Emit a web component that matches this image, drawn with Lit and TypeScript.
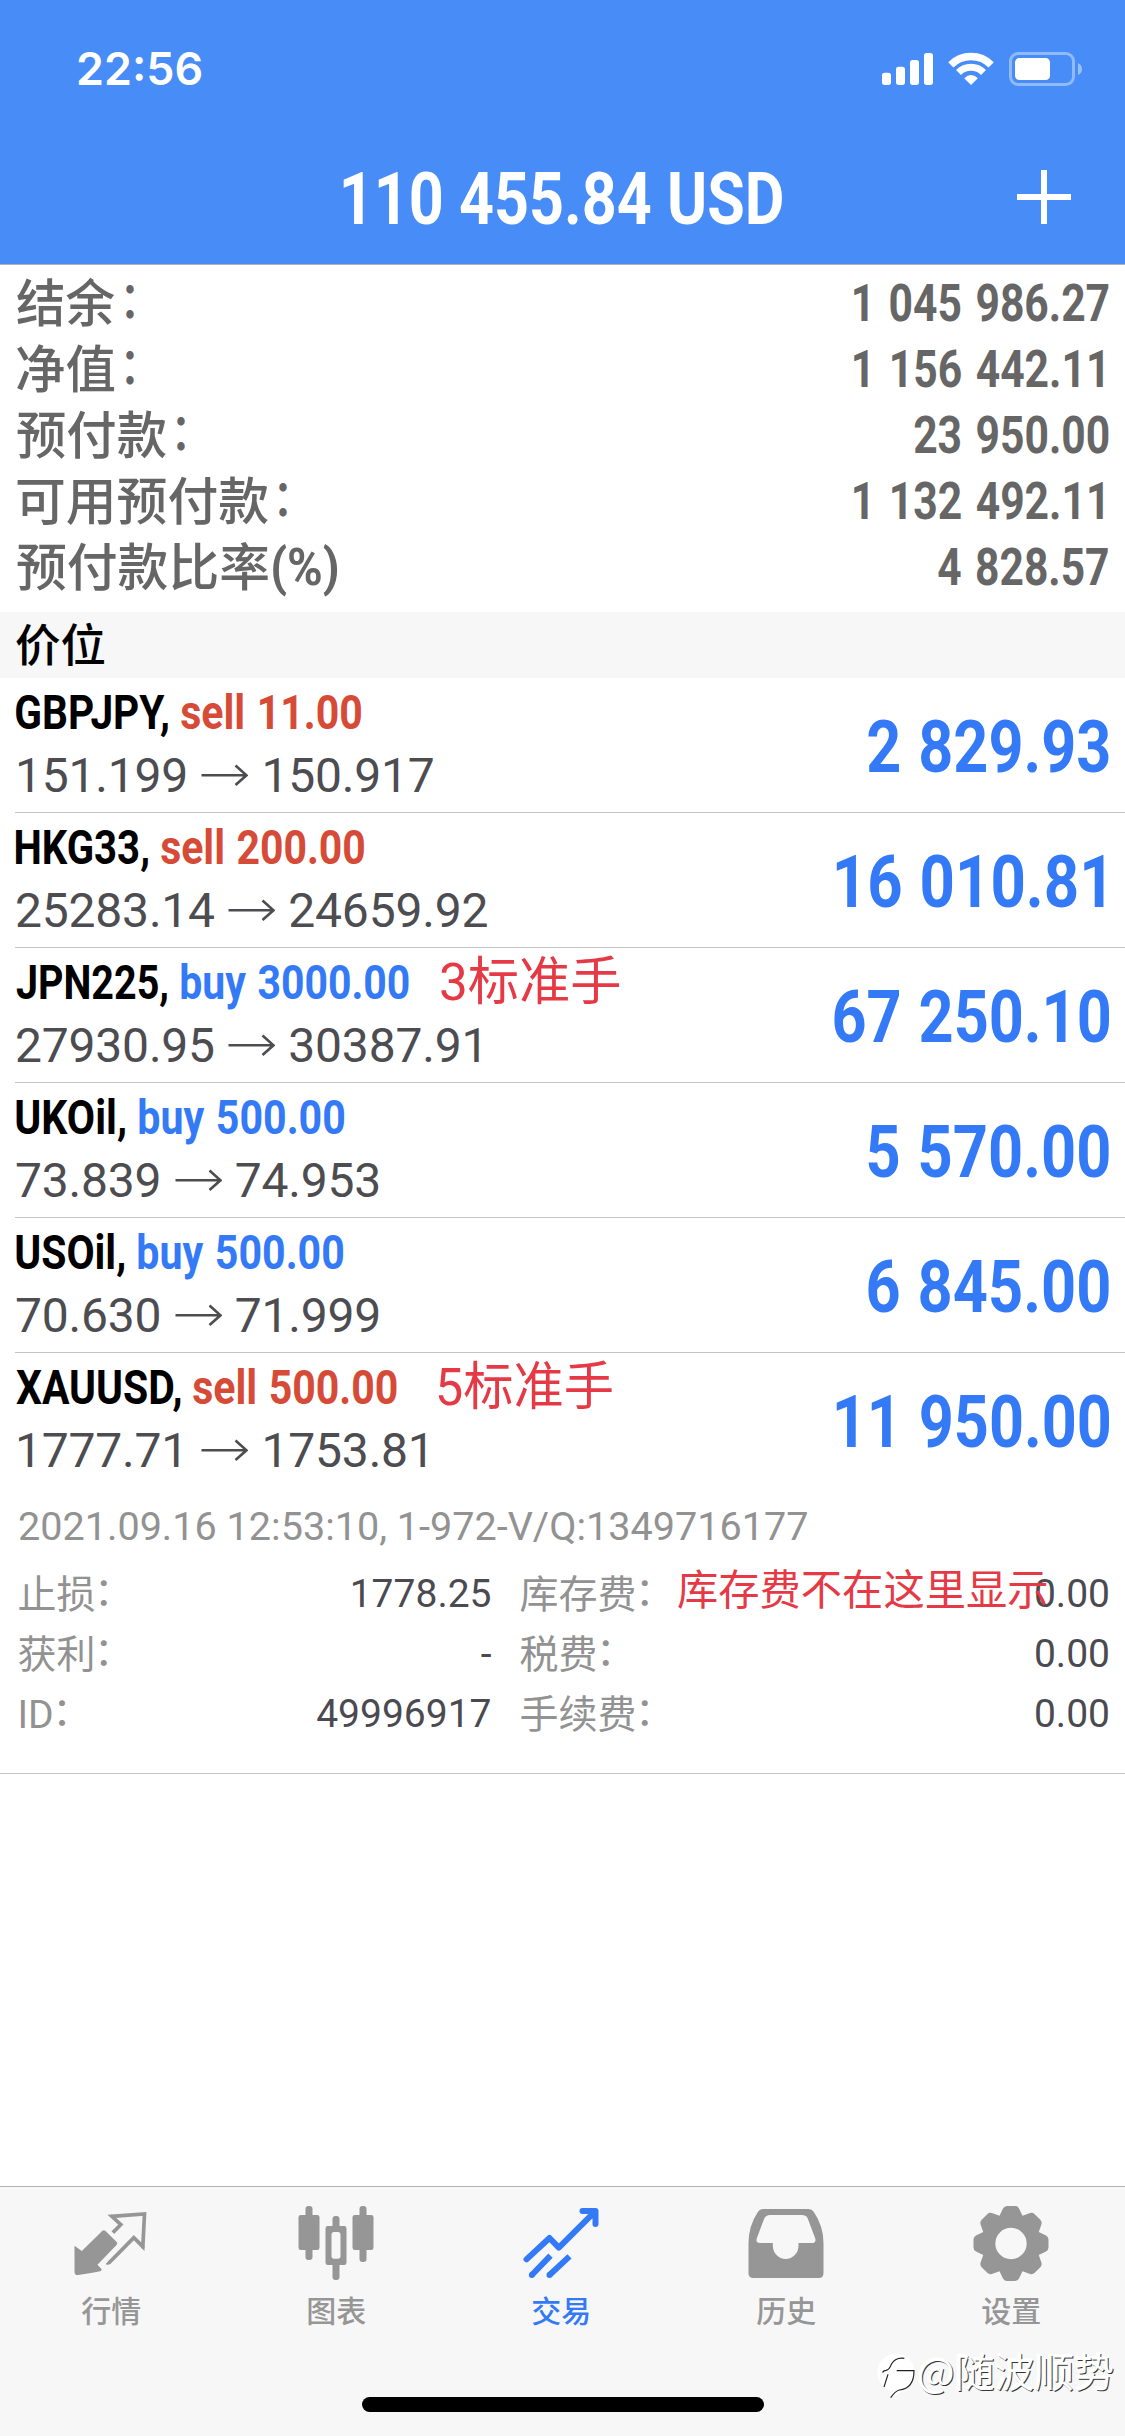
import { LitElement, html, css, svg, nothing } from "lit";
import { customElement, property, query } from "lit/decorators.js";

/** Text condensed horizontally so that its ink spans exactly `width` pixels. */
@customElement("condensed-text")
class CondensedText extends LitElement {
  @property({ type: Number }) width = 0;
  @property() text = "";
  @query(".glyphs") glyphs!: HTMLElement;

  static styles = css`
    :host {
      display: block;
      flex: none;
      white-space: pre;
    }
    .glyphs {
      display: block;
      width: max-content;
      transform-origin: 0 0;
    }
  `;

  render() {
    return html`<span class="glyphs">${this.text}</span>`;
  }

  updated() {
    const cs = getComputedStyle(this);
    const ctx = document.createElement("canvas").getContext("2d")! as any;
    ctx.font = `${cs.fontWeight} ${cs.fontSize} ${cs.fontFamily}`;
    ctx.wordSpacing = cs.wordSpacing;
    const m = ctx.measureText(this.text);
    const left = -m.actualBoundingBoxLeft;
    const scale = this.width / (m.actualBoundingBoxRight - left);
    this.style.width = `${this.width}px`;
    this.glyphs.style.transform = `translateX(${-left * scale}px) scaleX(${scale})`;
  }
}

const fit = (text: string, width: number, cls = "") =>
  html`<condensed-text class=${cls} .text=${text} .width=${width}></condensed-text>`;

interface Summary {
  label: string;
  labelWidth: number;
  suffix: string;
  value: string;
  width: number;
  inset: number;
}

const SUMMARY: Summary[] = [
  { label: "结余", labelWidth: 98, suffix: "：", value: "1 045 986.27", width: 255, inset: 0 },
  { label: "净值", labelWidth: 98, suffix: "：", value: "1 156 442.11", width: 248.7, inset: 6.3 },
  { label: "预付款", labelWidth: 149, suffix: "：", value: "23 950.00", width: 194.3, inset: 0 },
  { label: "可用预付款", labelWidth: 251, suffix: "：", value: "1 132 492.11", width: 248.7, inset: 6.3 },
  { label: "预付款比率", labelWidth: 251, suffix: "(%)", value: "4 828.57", width: 170.4, inset: 0 },
];

interface Position {
  symbol: string;
  symbolWidth: number;
  side: "buy" | "sell";
  volume: string;
  gap: number;
  sideWidth: number;
  open: string;
  current: string;
  profit: string;
  profitWidth: number;
  inset?: number;
  note?: string;
  noteGap?: number;
  noteWidth?: number;
}

const POSITIONS: Position[] = [
  { symbol: "GBPJPY,", symbolWidth: 152.5, gap: 12.2, side: "sell", volume: "11.00", sideWidth: 180.5, open: "151.199", current: "150.917", profit: "2 829.93", profitWidth: 240.5 },
  { symbol: "HKG33,", symbolWidth: 132.5, gap: 12.7, side: "sell", volume: "200.00", sideWidth: 203.5, open: "25283.14", current: "24659.92", profit: "16 010.81", profitWidth: 268, inset: 5 },
  { symbol: "JPN225,", symbolWidth: 151.5, gap: 13.5, side: "buy", volume: "3000.00", sideWidth: 228, open: "27930.95", current: "30387.91", profit: "67 250.10", profitWidth: 275, note: "3标准手", noteGap: 32, noteWidth: 178.6 },
  { symbol: "UKOil,", symbolWidth: 109.5, gap: 13, side: "buy", volume: "500.00", sideWidth: 205.5, open: "73.839", current: "74.953", profit: "5 570.00", profitWidth: 240.5 },
  { symbol: "USOil,", symbolWidth: 108.7, gap: 13, side: "buy", volume: "500.00", sideWidth: 205.5, open: "70.630", current: "71.999", profit: "6 845.00", profitWidth: 240.5 },
  { symbol: "XAUUSD,", symbolWidth: 165, gap: 11.5, side: "sell", volume: "500.00", sideWidth: 204, open: "1777.71", current: "1753.81", profit: "11 950.00", profitWidth: 273, note: "5标准手", noteGap: 41, noteWidth: 174 },
];

const DETAILS = [
  ["止损", "1778.25", "库存费", "0.00"],
  ["获利", "-", "税费", "0.00"],
  ["ID", "49996917", "手续费", "0.00"],
];

const toothPath = (() => {
  const cx = 514.5;
  const cy = 190.5;
  let d = "";
  for (let i = 0; i < 8; i++) {
    const a = (i * Math.PI) / 4;
    const p = (x: number, y: number) =>
      `${(cx + x * Math.cos(a) - y * Math.sin(a)).toFixed(1)} ${(cy + x * Math.sin(a) + y * Math.cos(a)).toFixed(1)}`;
    d += `${i ? "L" : "M"}${p(-34.5, -83.3)}L${p(-24, -105)}Q${p(-20, -112.5)} ${p(-12, -112.5)}L${p(12, -112.5)}Q${p(20, -112.5)} ${p(24, -105)}`;
    d += `L${p(34.5, -83.3)}`;
  }
  return d + `ZM${cx - 47} ${cy}a47 47 0 1 0 94 0a47 47 0 1 0 -94 0Z`;
})();

const TABS = [
  {
    label: "行情",
    box: "214.5 69 240 240",
    icon: svg`
      <path fill="currentColor" d="M225 201Q225 196 229 200L247 213L308 153Q313 148 318 153L351 185Q356 190 351 195L294 254L306 267Q309 271 302 274Q270 281 236 285Q225 286 225 275Z"/>
      <path fill="none" stroke="currentColor" stroke-width="11" d="M340 158L364 134L337 109L435 102L430 200L403 173L328 249"/>
      <path fill="currentColor" d="M319 251L325 245L333 251Q328 255 321 254ZM332 108Q332 104 337 104L345 109L337 114ZM426 199H436Q435 206 431 206Q427 206 424 203Z"/>`,
  },
  {
    label: "图表",
    box: "889.5 69 240 240",
    icon: svg`
      <g fill="currentColor">
        <rect x="897" y="105" width="63" height="105" rx="7"/><rect x="918" y="78" width="21" height="162" rx="9"/>
        <rect x="999" y="108" width="21" height="45" rx="9"/><rect x="999" y="240" width="21" height="60" rx="9"/>
        <path fill-rule="evenodd" d="M985 138h49a7 7 0 0 1 7 7v103a7 7 0 0 1 -7 7h-49a7 7 0 0 1 -7 -7v-103a7 7 0 0 1 7 -7ZM1004 156a8 8 0 0 0 -8 8v64a8 8 0 0 0 8 8h11a8 8 0 0 0 8 -8v-64a8 8 0 0 0 -8 -8Z"/>
        <rect x="1059" y="105" width="63" height="105" rx="7"/><rect x="1080" y="78" width="21" height="168" rx="9"/>
      </g>`,
  },
  {
    label: "交易",
    active: true,
    box: "184.5 69 240 240",
    icon: svg`
      <g fill="none" stroke="currentColor" stroke-width="18">
        <path stroke-linecap="round" stroke-linejoin="round" d="M201 238L270 174L298 203L404 97M369 93H408V132"/>
        <path d="M217 285L273 227M270 285L330 229"/>
      </g>
      <circle cx="217" cy="285" r="9" fill="currentColor"/><circle cx="270" cy="285" r="9" fill="currentColor"/>`,
  },
  {
    label: "历史",
    box: "859.5 69 240 240",
    icon: svg`<path fill="currentColor" fill-rule="evenodd" d="M912 87H1046Q1057 87 1063 96Q1092 138 1092 190V280Q1092 294 1078 294H881Q867 294 867 280V190Q867 138 895 96Q901 87 912 87ZM932 105Q919 105 914 116L892 175Q888 189 901 189H940V197A38.5 40 0 0 0 1017 197V189H1057Q1071 189 1067 175L1045 116Q1041 105 1027 105Z"/>`,
  },
  {
    label: "设置",
    box: "394.5 69 240 240",
    icon: svg`<path fill="currentColor" fill-rule="evenodd" d=${toothPath}/>`,
  },
];

@customElement("app-root")
class AppRoot extends LitElement {
  static styles = css`
    :host {
      display: flex;
      flex-direction: column;
      position: relative;
      width: 1125px;
      height: 2436px;
      overflow: hidden;
      background: #fff;
      color: #000;
      font-family: Roboto, "Noto Sans CJK SC", sans-serif;
    }
    .head {
      background: #478cf7;
      color: #fff;
      border-bottom: 1px solid #b2b2b2;
    }
    .status {
      display: flex;
      justify-content: space-between;
      height: 132px;
      box-sizing: border-box;
      padding: 0 30px 0 78px;
    }
    .time {
      font: 600 45px/131px Inter, sans-serif;
      padding-top: 3px;
    }
    .signals {
      width: 225px;
      height: 60px;
      margin-top: 40px;
    }
    .nav {
      display: grid;
      grid-template-columns: 1fr auto 1fr;
      height: 132px;
      line-height: 136px;
      font-size: 72px;
      font-weight: 700;
    }
    .plus {
      width: 54px;
      height: 54px;
      justify-self: end;
      margin: 38px 54px 0 0;
    }
    .title {
      grid-column: 2;
    }
    .summary {
      padding: 5px 16.4px 12px 17px;
    }
    .sum-row {
      display: flex;
      height: 66px;
      line-height: 68px;
      color: #666;
      font-size: 51px;
    }
    .sum-label {
      font-weight: 500;
      line-height: 70px;
    }
    .sum-suffix {
      font-weight: 700;
      margin-left: 4.5px;
    }
    .sum-colon {
      font-weight: 500;
      margin-left: 10.5px;
      line-height: 62px;
    }
    .sum-value {
      font-weight: 700;
      word-spacing: 3.5px;
    }
    .push {
      margin-left: auto;
    }
    .band {
      height: 66px;
      box-sizing: border-box;
      padding-left: 16px;
      background: #f7f7f7;
      font-size: 45px;
      font-weight: 500;
      line-height: 70px;
    }
    .row {
      display: flex;
      justify-content: space-between;
      box-sizing: border-box;
      height: 135px;
      margin-left: 15px;
      padding-right: 16.5px;
      border-bottom: 1px solid #c4c4c7;
    }
    .row.last {
      height: 144px;
      border: 0;
    }
    .name {
      display: flex;
      height: 67px;
      padding-left: 1.3px;
      font-size: 48px;
      font-weight: 700;
      line-height: 69px;
      word-spacing: 1.5px;
    }
    .sell {
      color: #d64b37;
    }
    .buy,
    .profit {
      color: #347af7;
    }
    .note {
      color: #e63946;
      font-size: 52px;
      font-weight: 400;
      line-height: 69px;
    }
    .prices {
      display: flex;
      align-items: flex-start;
      height: 61px;
      line-height: 61px;
      font-size: 48px;
      color: #4c4c51;
      white-space: pre;
      letter-spacing: -0.2px;
      word-spacing: 1.5px;
    }
    .arrow {
      width: 47px;
      height: 24px;
      margin: 18px 0 0;
    }
    .profit {
      padding-top: 3px;
      line-height: 133px;
      font-size: 72px;
      font-weight: 700;
      word-spacing: 2px;
    }
    .more {
      position: relative;
      padding: 0 15px 29px 17.5px;
      border-bottom: 1px solid #c4c4c7;
      font-size: 39px;
      line-height: 60px;
      color: #929292;
    }
    .comment {
      margin: 0 0 7px 1px;
    }
    .grid {
      display: grid;
      grid-template-columns: 150px 324px 188px 1fr;
    }
    .key {
      line-height: 62px;
      margin-bottom: -2px;
    }
    .key.second {
      padding-left: 28px;
    }
    .colon {
      display: inline-block;
      line-height: 1;
      transform: translate(-1.5px, -3px);
    }
    .num {
      color: #4a4a50;
      text-align: right;
    }
    .swap-note {
      position: absolute;
      left: 678px;
      top: 64px;
      color: #e63946;
      font-size: 41.5px;
    }
    .tabs {
      display: grid;
      grid-template-columns: repeat(5, 225px);
      margin-top: auto;
      height: 249px;
      border-top: 1px solid #b2b2b2;
      background: #f7f7f7;
      color: #969696;
    }
    .tab {
      display: flex;
      flex-direction: column;
      align-items: center;
      padding: 16px 2.4px 0 0;
      font-size: 30px;
      font-weight: 500;
      line-height: 40px;
    }
    .tab.active {
      color: #347af7;
    }
    .tab-icon {
      width: 80px;
      height: 80px;
      margin-bottom: 9px;
    }
    .home {
      position: absolute;
      left: 362px;
      bottom: 24px;
      width: 402px;
      height: 15px;
      border-radius: 8px;
      background: #000;
    }
    .mark {
      position: absolute;
      left: 876px;
      top: 2345px;
      display: flex;
      color: #fff;
      font: 400 39.5px/49px "Noto Sans CJK SC", sans-serif;
      text-shadow: 1px 1px 0 #333, -1px -1px 0 #fff;
    }
    .mark-logo {
      width: 43px;
      height: 60px;
    }
  `;

  private renderPosition(p: Position, last: boolean) {
    return html`<div class="row ${last ? "last" : ""}">
      <div>
        <div class="name">
          ${fit(p.symbol, p.symbolWidth)}
          <span style="width:${p.gap}px"></span>
          ${fit(`${p.side} ${p.volume}`, p.sideWidth, p.side)}
          ${p.note
            ? html`<span style="width:${p.noteGap}px"></span>${fit(p.note, p.noteWidth!, "note")}`
            : nothing}
        </div>
        <div class="prices">
          <span>${p.open + " "}</span>
          <svg class="arrow" viewBox="0 0 47 24">
            <path fill="none" stroke="currentColor" stroke-width="2.6" d="M0.5 12.3H45.5M34.5 2.5L45.5 12.3L34.5 22" />
          </svg>
          <span>${" " + p.current}</span>
        </div>
      </div>
      <div class="profit" style="margin-right:${p.inset ?? 0}px">${fit(p.profit, p.profitWidth)}</div>
    </div>`;
  }

  render() {
    const colon = html`<span class="colon">：</span>`;
    return html`
      <div class="head">
        <div class="status">
          ${fit("22:56", 123.4, "time")}
          <svg class="signals" viewBox="0 0 675 180" fill="#fff">
            <rect x="36" y="98" width="27" height="37" rx="8" />
            <rect x="78" y="80" width="27" height="55" rx="8" />
            <rect x="120" y="60" width="27" height="75" rx="8" />
            <rect x="162" y="39" width="27" height="96" rx="8" />
            <path d="M303 135L282.500 114.500Q303 96 323.500 114.500Z" />
            <g fill="none" stroke="#fff">
              <path stroke-width="21" d="M265.500 97.500A53 53 0 0 1 340.500 97.500" />
              <path stroke-width="22" d="M242.500 74.500A86 86 0 0 1 363.500 74.500" />
            </g>
            <rect x="421.500" y="40.500" width="189" height="93" rx="23" fill="none" stroke="#fff" stroke-width="9" opacity=".4" />
            <rect x="435" y="54" width="105" height="66" rx="13" />
            <path opacity=".45" d="M624 69Q636 75 636 87T624 105Z" />
          </svg>
        </div>
        <div class="nav">
          ${fit("110 455.84 USD", 439, "title")}
          <svg class="plus" viewBox="0 0 54 54"><path fill="none" stroke="#fff" stroke-width="6" d="M27 0V54M0 27H54" /></svg>
        </div>
      </div>

      <div class="summary">
        ${SUMMARY.map(
          (s) => html`<div class="sum-row">
            ${fit(s.label, s.labelWidth, "sum-label")}
            ${s.suffix === "：" ? fit(s.suffix, 8.6, "sum-colon") : fit(s.suffix, 65, "sum-suffix")}
            <div class="push" style="margin-right:${s.inset}px">${fit(s.value, s.width, "sum-value")}</div>
          </div>`
        )}
      </div>

      <div class="band">${fit("价位", 88)}</div>

      ${POSITIONS.map((p, i) => this.renderPosition(p, i === POSITIONS.length - 1))}

      <div class="more">
        ${fit("2021.09.16 12:53:10, 1-972-V/Q:1349716177", 788.5, "comment")}
        <div class="grid">
          ${DETAILS.map(
            ([a, b, c, d]) => html`<span class="key">${a}${colon}</span><span class="num">${b}</span
              ><span class="key second">${c}${colon}</span><span class="num">${d}</span>`
          )}
        </div>
        ${fit("库存费不在这里显示", 369, "swap-note")}
      </div>

      <div class="tabs">
        ${TABS.map(
          (t) => html`<div class="tab ${t.active ? "active" : ""}">
            <svg class="tab-icon" viewBox=${t.box}>${t.icon}</svg>
            ${t.label}
          </div>`
        )}
      </div>

      <div class="home"></div>
      <div class="mark">
        <svg class="mark-logo" viewBox="18 0 129 180">
          <circle cx="78" cy="82" r="56" fill="#fff" />
          <path fill="#fff" d="M132 82Q128 134 62 157L76 110Z" />
          <g fill="none" stroke="#222" stroke-width="3.500">
            <path d="M42 126L54 88M38 83Q40 76 48 76Q58 74 64 58Q76 36 103 40" />
            <path d="M80 77H132Q132 130 88 135Q76 138 62 158" />
          </g>
        </svg>
        ${fit("@随波顺势", 193.5)}
      </div>
    `;
  }
}
